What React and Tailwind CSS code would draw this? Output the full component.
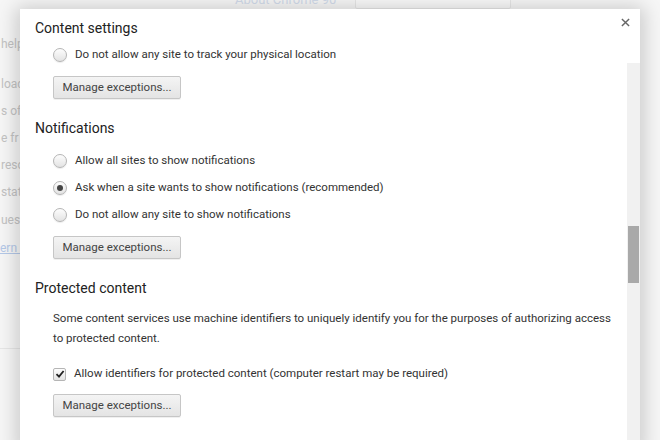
import React from "react";

const font = { fontFamily: "Roboto, 'Noto Sans', sans-serif" };

function Radio({ checked }) {
  return (
    <span className="relative flex h-[14px] w-[14px] shrink-0 items-center justify-center rounded-full border border-[#b5b5b5] bg-gradient-to-b from-[#fdfdfd] to-[#e3e3e3] shadow-[0_1px_1px_rgba(0,0,0,0.08)]">
      {checked && <span className="h-[6px] w-[6px] rounded-full bg-[#444]" />}
    </span>
  );
}

function RadioRow({ checked, children }) {
  return (
    <div className="flex h-[18px] items-center gap-[8px] pl-[33px] text-[11.5px] text-[#333]">
      <Radio checked={checked} />
      <span>{children}</span>
    </div>
  );
}

function Btn({ className = "" }) {
  return (
    <div className={"pl-[33px] " + className}>
      <div className="flex h-[23px] w-[128px] items-center justify-center rounded-[2px] border border-[#c6c6c6] bg-gradient-to-b from-[#f4f4f4] to-[#e4e4e4] text-[11.5px] text-[#444] shadow-[0_1px_0_rgba(0,0,0,0.06)]">
        Manage exceptions...
      </div>
    </div>
  );
}

function Heading({ children, className = "" }) {
  return (
    <div className={"pl-[15px] text-[14px] leading-[20px] text-[#222] " + className}>
      {children}
    </div>
  );
}

export default function App() {
  const bgLines = [
    { t: "help", y: "mt-[26px]" },
    { t: "load", y: "mt-[22px]" },
    { t: "s of", y: "mt-[9px]" },
    { t: "e fr", y: "mt-[9px]" },
    { t: "reso", y: "mt-[9px]" },
    { t: "stat", y: "mt-[9px]" },
    { t: "uest", y: "mt-[10px]" },
  ];
  return (
    <div className="relative h-[440px] w-[660px] overflow-hidden bg-[#f6f6f6]" style={font}>
      {/* background page */}
      <div className="flex h-[440px] flex-col">
        <div className="relative h-[9px] overflow-hidden">
          <div className="absolute left-[235px] top-[-9px] text-[13px] leading-[18px] text-[#d2dbea]">About Chrome 90</div>
          <div className="absolute left-[355px] top-[-5px] h-[14px] w-[156px] rounded-[2px] border border-[#e6e6e6] bg-[#f9f9f9]" />
        </div>
        <div className="flex flex-col text-[12px] leading-[18px] text-[#c2c2c2]">
          {bgLines.map((l) => (
            <div key={l.t} className={l.y + " pl-[1px]"}>
              {l.t} you
            </div>
          ))}
          <div className="mt-[10px] text-[#b4c8e8] underline">ern more</div>
        </div>
        <div className="mt-[91px] h-px w-[20px] bg-[#e6e6e6]" />
      </div>

      {/* dialog */}
      <div className="absolute left-[20px] top-[9px] flex h-[440px] w-[620px] flex-col bg-white shadow-[0_2px_18px_4px_rgba(0,0,0,0.18)]">
        <div className="relative h-[37px]">
          <div className="pl-[15px] pt-[9px] text-[14px] leading-[20px] text-[#222]">Content settings</div>
          <svg className="absolute right-[10px] top-[9px]" width="9" height="9" viewBox="0 0 10 10">
            <path d="M1 1 L9 9 M9 1 L1 9" stroke="#666" strokeWidth="1.6" />
          </svg>
        </div>
        <div className="flex flex-1 overflow-hidden">
          <div className="flex flex-1 flex-col">
            <RadioRow>Do not allow any site to track your physical location</RadioRow>
            <Btn className="mt-[12px]" />
            <Heading className="mt-[19px]">Notifications</Heading>
            <div className="mt-[14px] flex flex-col gap-[9px]">
              <RadioRow>Allow all sites to show notifications</RadioRow>
              <RadioRow checked>Ask when a site wants to show notifications (recommended)</RadioRow>
              <RadioRow>Do not allow any site to show notifications</RadioRow>
            </div>
            <Btn className="mt-[12px]" />
            <Heading className="mt-[19px]">Protected content</Heading>
            <div className="mt-[10px] pl-[33px] text-[11.5px] leading-[20px] text-[#333]">
              Some content services use machine identifiers to uniquely identify you for the purposes of authorizing access
              <br />
              to protected content.
            </div>
            <div className="mt-[17px] flex h-[18px] items-center gap-[8px] pl-[33px] text-[11.5px] text-[#333]">
              <span className="flex h-[13px] w-[13px] items-center justify-center rounded-[2px] border border-[#b5b5b5] bg-gradient-to-b from-[#fdfdfd] to-[#e3e3e3]">
                <svg width="10" height="10" viewBox="0 0 10 10">
                  <path d="M1.5 5.2 L4 7.6 L8.6 2" stroke="#222" strokeWidth="1.8" fill="none" />
                </svg>
              </span>
              <span>Allow identifiers for protected content (computer restart may be required)</span>
            </div>
            <Btn className="mt-[11px]" />
          </div>
          <div className="mt-[17px] flex w-[13px] flex-col bg-[#f1f1f1]">
            <div className="mt-[163px] ml-[1px] h-[57px] w-[11px] bg-[#a9a9a9]" />
          </div>
        </div>
      </div>
    </div>
  );
}
